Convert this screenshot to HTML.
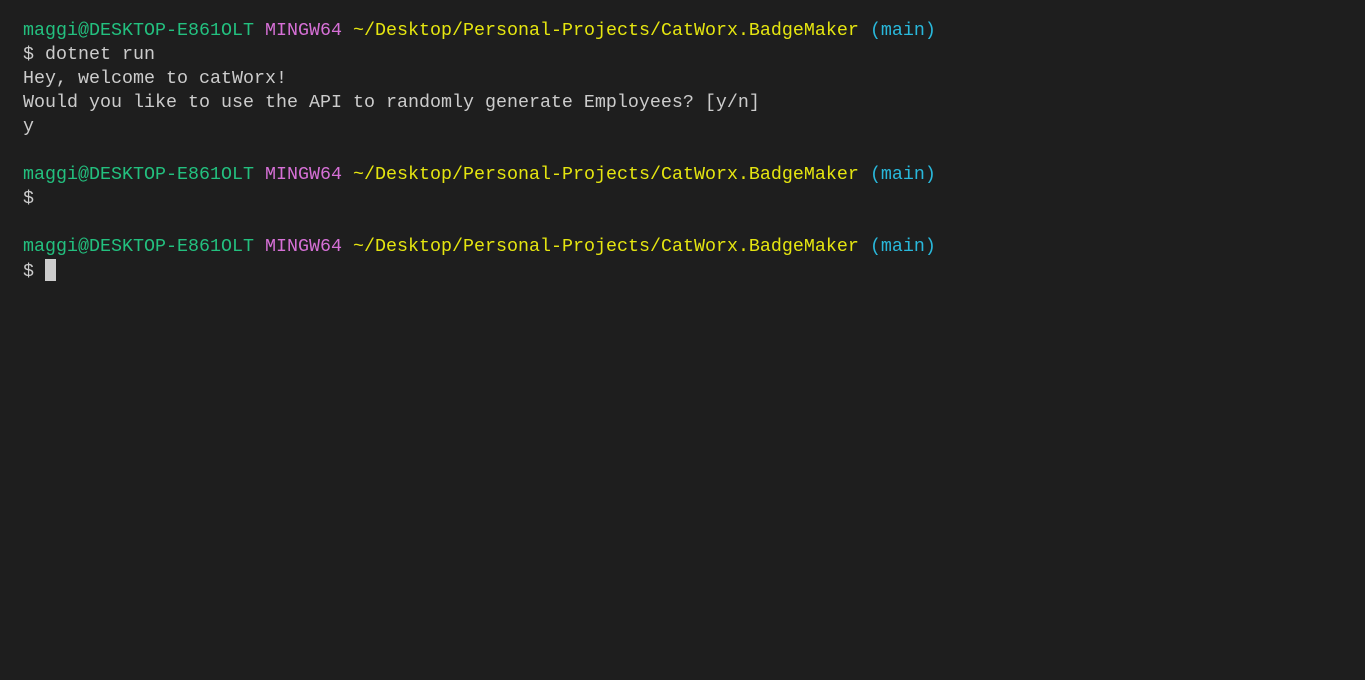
<!DOCTYPE html>
<html><head><meta charset="utf-8"><style>
html,body{margin:0;padding:0;background:#1e1e1e;width:1365px;height:680px;overflow:hidden}
pre{margin:0;position:absolute;left:23px;top:19px;font-family:"Liberation Mono",monospace;font-size:18.33px;line-height:24px;color:#cccccc;white-space:pre}
.g{color:#23c07f}.m{color:#d670d6}.y{color:#e5e510}.c{color:#29b8db}
.cur{display:inline-block;width:11px;height:22px;background:#cccccc;vertical-align:-5px}
</style></head><body>
<pre><span class="g">maggi@DESKTOP-E861OLT</span> <span class="m">MINGW64</span> <span class="y">~/Desktop/Personal-Projects/CatWorx.BadgeMaker</span> <span class="c">(main)</span>
$ dotnet run
Hey, welcome to catWorx!
Would you like to use the API to randomly generate Employees? [y/n]
y

<span class="g">maggi@DESKTOP-E861OLT</span> <span class="m">MINGW64</span> <span class="y">~/Desktop/Personal-Projects/CatWorx.BadgeMaker</span> <span class="c">(main)</span>
$

<span class="g">maggi@DESKTOP-E861OLT</span> <span class="m">MINGW64</span> <span class="y">~/Desktop/Personal-Projects/CatWorx.BadgeMaker</span> <span class="c">(main)</span>
$ <span class="cur"></span></pre>
</body></html>
